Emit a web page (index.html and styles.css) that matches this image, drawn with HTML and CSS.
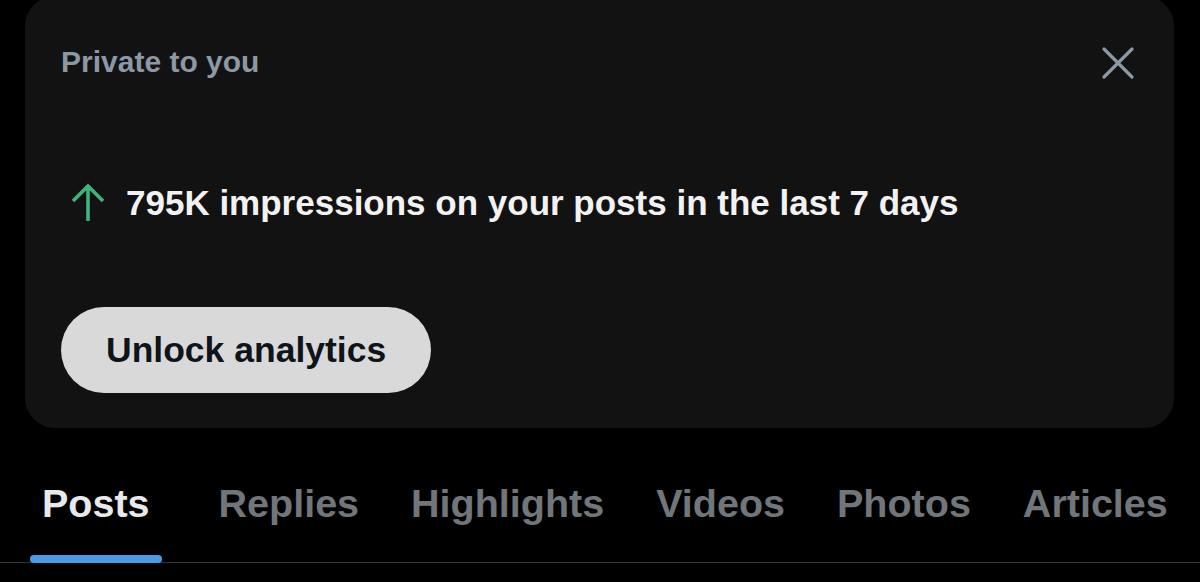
FILE: index.html
```html
<!DOCTYPE html>
<html>
<head>
<meta charset="utf-8">
<link rel="stylesheet" href="styles.css">
</head>
<body>
<div class="page">
  <section class="card">
    <div class="card-head">
      <span class="private">Private to you</span>
      <button class="close" aria-label="Close">
        <svg width="34" height="34" viewBox="0 0 34 34"><path d="M3 3 L31 31 M31 3 L3 31" stroke="#8b98a5" stroke-width="3.2" stroke-linecap="round" fill="none"/></svg>
      </button>
    </div>
    <div class="stat">
      <svg class="arrow" width="36" height="40" viewBox="0 0 36 40"><path d="M18 38 V4 M3 18 L18 3 L33 18" stroke="#3fb57c" stroke-width="3.6" fill="none" stroke-linejoin="miter"/></svg>
      <span class="stat-text">795K impressions on your posts in the last 7 days</span>
    </div>
    <button class="unlock">Unlock analytics</button>
  </section>
  <nav class="tabs">
    <div class="tab active"><span>Posts</span><i class="bar"></i></div>
    <div class="tab"><span>Replies</span></div>
    <div class="tab"><span>Highlights</span></div>
    <div class="tab"><span>Videos</span></div>
    <div class="tab"><span>Photos</span></div>
    <div class="tab"><span>Articles</span></div>
  </nav>
</div>
</body>
</html>
```
FILE: styles.css
```css
* { box-sizing: border-box; }
html, body { margin: 0; padding: 0; background: #000; }
body { width: 1200px; height: 582px; overflow: hidden; font-family: "Liberation Sans", Arial, sans-serif; font-weight: 700; }
.page { display: flex; flex-direction: column; }
.card {
  margin: -4px 26px 0 25px;
  height: 432px;
  background: #121212;
  border-radius: 30px;
  padding: 42px 36px 0 36px;
  display: flex;
  flex-direction: column;
  align-items: flex-start;
}
.card-head { width: 100%; display: flex; justify-content: space-between; align-items: center; height: 48px; }
.private { color: #8b98a5; font-size: 30px; }
.close { background: none; border: 0; padding: 0; margin-right: 3px; margin-top: 2px; width: 34px; height: 34px; display: flex; }
.stat { display: flex; align-items: center; margin-top: 95px; height: 44px; }
.arrow { margin-left: 9px; margin-right: 20px; }
.stat-text { color: #f2f2f2; font-size: 35px; }
.unlock {
  margin-top: 82px;
  height: 86px;
  padding: 0 45px;
  border: 0;
  border-radius: 43px;
  background: #d9d9d9;
  color: #0f1419;
  font-family: inherit;
  font-weight: 700;
  font-size: 35.5px;
}
.tabs {
  margin-top: 49px;
  height: 86px;
  display: flex;
  border-bottom: 1px solid #2f3336;
  padding-left: 30px;
  gap: 52px;
}
.tab { position: relative; display: flex; align-items: center; color: #71767b; font-size: 39.5px; height: 86px; padding-bottom: 33px; }
.tab.active { color: #e7e9ea; padding: 0 12px 33px; margin-right: 5px; }
.bar { position: absolute; left: 0; right: 0; bottom: 0; height: 8px; border-radius: 4px; background: #4a9be8; }
```
